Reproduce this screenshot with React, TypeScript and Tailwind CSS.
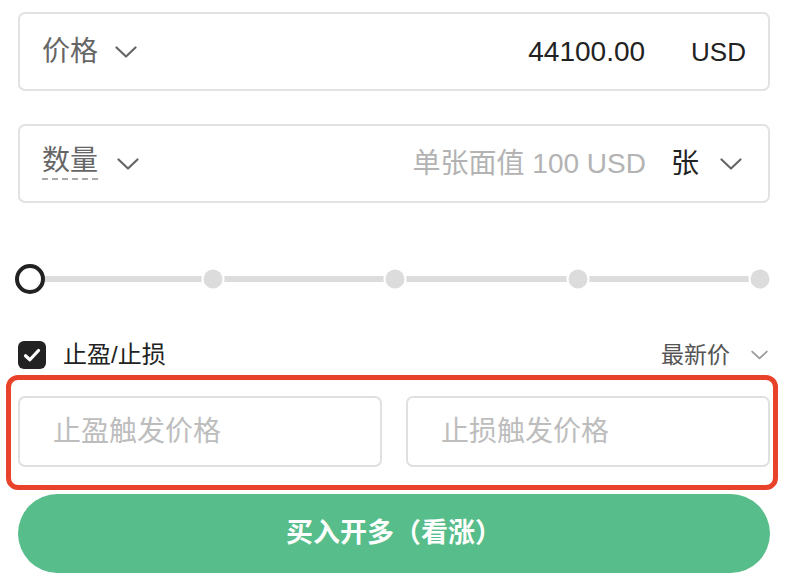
import { useState } from "react";

const font = { fontFamily: '"Liberation Sans", "Noto Sans CJK SC", sans-serif' };

function Chevron({ className }: { className?: string }) {
  return (
    <svg className={className} viewBox="0 0 22 12" fill="none" stroke="currentColor" strokeWidth={2.2} strokeLinecap="round" strokeLinejoin="round">
      <path d="M1.5 1.5L11 10.5L20.5 1.5" />
    </svg>
  );
}

export default function App() {
  const [checked, setChecked] = useState(true);
  const marks = ["left-[25%]", "left-[50%]", "left-[75%]", "left-[100%]"];

  return (
    <div className="w-[786px] h-[584px] bg-white pl-[18px] pr-[16px] pt-[12px] flex flex-col overflow-hidden" style={font}>
      {/* Price */}
      <div className="h-[79px] border-2 border-[#e2e2e2] rounded-[7px] flex items-center pl-[22px] pr-[22px]">
        <span className="text-[28px] text-[#666] leading-none">价格</span>
        <Chevron className="w-[22px] h-[12px] ml-[17px] text-[#666]" />
        <span className="flex-1 text-right text-[28px] text-[#222] leading-none">44100.00</span>
        <span className="ml-[46px] text-[26px] text-[#222] leading-none">USD</span>
      </div>

      {/* Quantity */}
      <div className="mt-[33px] h-[79px] border-2 border-[#e2e2e2] rounded-[7px] flex items-center pl-[22px] pr-[26px]">
        <span className="text-[28px] text-[#666] leading-none pb-[3px] border-b-2 border-dashed border-[#aaa]">数量</span>
        <Chevron className="w-[22px] h-[12px] ml-[19px] text-[#666]" />
        <span className="flex-1 text-right text-[28px] text-[#b3b3b3] leading-none">单张面值 100 USD</span>
        <span className="ml-[25px] text-[28px] text-[#222] leading-none">张</span>
        <Chevron className="w-[22px] h-[12px] ml-[21px] text-[#666]" />
      </div>

      {/* Slider */}
      <div className="mt-[61px] ml-[12px] mr-[10px] h-[30px] relative">
        <div className="absolute left-0 right-0 top-1/2 -translate-y-1/2 h-[6px] bg-[#dcdcdc]" />
        {marks.map((m) => (
          <div
            key={m}
            className={`absolute ${m} top-1/2 -translate-x-1/2 -translate-y-1/2 w-[19px] h-[19px] rounded-full bg-[#dcdcdc] ring-2 ring-white`}
          />
        ))}
        <div className="absolute left-0 top-1/2 -translate-x-1/2 -translate-y-1/2 w-[30px] h-[30px] rounded-full bg-white border-4 border-[#222]" />
      </div>

      {/* TP/SL toggle */}
      <div className="mt-[47px] h-[28px] flex items-center justify-between">
        <button className="flex items-center" onClick={() => setChecked(!checked)}>
          <span className={`w-[28px] h-[28px] rounded-[6px] flex items-center justify-center ${checked ? "bg-[#222]" : "border-2 border-[#ccc]"}`}>
            {checked && (
              <svg viewBox="0 0 16 16" className="w-[20px] h-[20px]" fill="none" stroke="white" strokeWidth={2.6} strokeLinecap="round" strokeLinejoin="round">
                <path d="M2.8 8.6L6.3 11.8L13.2 4.4" />
              </svg>
            )}
          </span>
          <span className="ml-[17px] text-[24px] text-[#222] leading-none">止盈/止损</span>
        </button>
        <div className="flex items-center pr-[2px]">
          <span className="text-[23px] text-[#555] leading-none">最新价</span>
          <Chevron className="w-[17px] h-[10px] ml-[21px] text-[#999]" />
        </div>
      </div>

      {/* Trigger inputs */}
      <div className="mt-[27px] relative grid grid-cols-2 gap-[24px]">
        <input
          placeholder="止盈触发价格"
          className="h-[71px] border-2 border-[#e0e0e0] rounded-[7px] px-[33px] text-[28px] text-[#222] placeholder:text-[#bdbdbd] outline-none"
        />
        <input
          placeholder="止损触发价格"
          className="h-[71px] border-2 border-[#e0e0e0] rounded-[7px] px-[33px] text-[28px] text-[#222] placeholder:text-[#bdbdbd] outline-none"
        />
        <div className="absolute -left-[12px] -right-[8px] -top-[21px] -bottom-[23px] border-[5px] border-[#e8422b] rounded-[12px] pointer-events-none" />
      </div>

      {/* Buy */}
      <button className="mt-[27px] h-[79px] rounded-full bg-[#57bd8a] text-white text-[27px] font-bold flex items-center justify-center">
        买入开多（看涨）
      </button>
    </div>
  );
}
